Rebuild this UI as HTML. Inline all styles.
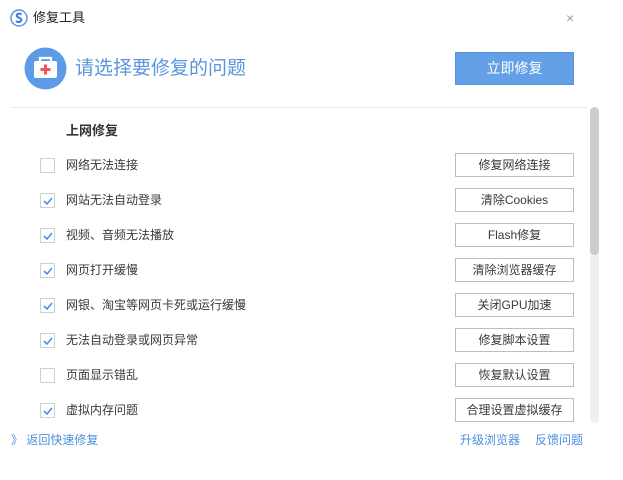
<!DOCTYPE html>
<html><head><meta charset="utf-8"><style>
*{margin:0;padding:0;box-sizing:border-box}
body{width:623px;height:480px;background:#fff;font-family:"Liberation Sans","Noto Sans CJK SC",sans-serif;position:relative;overflow:hidden;color:#333}
.a{position:absolute}
.row{position:absolute;left:0;width:590px;height:24px}
.cb{position:absolute;left:40px;top:5px;width:15px;height:15px;border:1px solid #cfcfcf;background:#fff}
.cb svg{position:absolute;left:1px;top:1px}
.lbl{position:absolute;left:66px;top:3px;font-size:12px;color:#3a3a3a;line-height:18px}
.btn{position:absolute;left:455px;top:0;width:119px;height:24px;border:1px solid #bdbdbd;font-size:12px;line-height:22px;text-align:center;color:#3a3a3a;background:#fff}
</style></head><body>
<svg class="a" style="left:10px;top:9px" width="18" height="18" viewBox="0 0 18 18"><circle cx="9" cy="9" r="8" fill="#fff" stroke="#5b94df" stroke-width="1.5"/><path d="M11.5 5.5C10 4 6.5 4.5 6.8 7 7 8.8 11.5 8.5 11.3 11 11 13.3 7.5 13.5 6 12" stroke="#3b7dd8" stroke-width="2" fill="none"/></svg>
<div class="a" style="left:33px;top:9px;font-size:13px;color:#222;line-height:18px">修复工具</div>
<div class="a" style="left:566px;top:9px;font-size:14px;color:#999;line-height:18px">×</div>
<svg class="a" style="left:24px;top:47px" width="43" height="43" viewBox="0 0 43 43"><circle cx="21.5" cy="21.5" r="21" fill="#5e9be6"/><path d="M16 14v-3h11v3" stroke="#fff" stroke-width="2.2" fill="none"/><rect x="10" y="14" width="23" height="17" rx="2" fill="#fff"/><path d="M21.5 17.5v10M16.5 22.5h10" stroke="#f25555" stroke-width="3"/></svg>
<div class="a" style="left:75px;top:56px;font-size:19px;color:#5b94df;line-height:26px">请选择要修复的问题</div>
<div class="a" style="left:455px;top:52px;width:119px;height:33px;background:#64a0e8;border:1px solid #5a93dd;color:#fff;font-size:14px;text-align:center;line-height:31px">立即修复</div>
<div class="a" style="left:11px;top:107px;width:577px;height:1px;background:#ececec"></div>
<div class="a" style="left:590px;top:107px;width:9px;height:316px;background:#efefef;border-radius:5px"></div>
<div class="a" style="left:590px;top:107px;width:9px;height:148px;background:#cdcdcd;border-radius:5px"></div>
<div class="a" style="left:66px;top:122px;font-size:13px;font-weight:bold;color:#333;line-height:18px">上网修复</div>

<div class="row" style="top:153px"><div class="cb"></div><div class="lbl">网络无法连接</div><div class="btn">修复网络连接</div></div>
<div class="row" style="top:188px"><div class="cb"><svg width="12" height="12" viewBox="0 0 12 12"><path d="M2 6l3 3 5-6" stroke="#4d8fe0" stroke-width="1.6" fill="none"/></svg></div><div class="lbl">网站无法自动登录</div><div class="btn">清除Cookies</div></div>
<div class="row" style="top:223px"><div class="cb"><svg width="12" height="12" viewBox="0 0 12 12"><path d="M2 6l3 3 5-6" stroke="#4d8fe0" stroke-width="1.6" fill="none"/></svg></div><div class="lbl">视频、音频无法播放</div><div class="btn">Flash修复</div></div>
<div class="row" style="top:258px"><div class="cb"><svg width="12" height="12" viewBox="0 0 12 12"><path d="M2 6l3 3 5-6" stroke="#4d8fe0" stroke-width="1.6" fill="none"/></svg></div><div class="lbl">网页打开缓慢</div><div class="btn">清除浏览器缓存</div></div>
<div class="row" style="top:293px"><div class="cb"><svg width="12" height="12" viewBox="0 0 12 12"><path d="M2 6l3 3 5-6" stroke="#4d8fe0" stroke-width="1.6" fill="none"/></svg></div><div class="lbl">网银、淘宝等网页卡死或运行缓慢</div><div class="btn">关闭GPU加速</div></div>
<div class="row" style="top:328px"><div class="cb"><svg width="12" height="12" viewBox="0 0 12 12"><path d="M2 6l3 3 5-6" stroke="#4d8fe0" stroke-width="1.6" fill="none"/></svg></div><div class="lbl">无法自动登录或网页异常</div><div class="btn">修复脚本设置</div></div>
<div class="row" style="top:363px"><div class="cb"></div><div class="lbl">页面显示错乱</div><div class="btn">恢复默认设置</div></div>
<div class="row" style="top:398px"><div class="cb"><svg width="12" height="12" viewBox="0 0 12 12"><path d="M2 6l3 3 5-6" stroke="#4d8fe0" stroke-width="1.6" fill="none"/></svg></div><div class="lbl">虚拟内存问题</div><div class="btn">合理设置虚拟缓存</div></div>

<div class="a" style="left:11px;top:431px;font-size:12px;color:#4d8fe0">》 返回快速修复</div>
<div class="a" style="left:460px;top:431px;font-size:12px;color:#4d8fe0">升级浏览器</div>
<div class="a" style="left:535px;top:431px;font-size:12px;color:#4d8fe0">反馈问题</div>
</body></html>
